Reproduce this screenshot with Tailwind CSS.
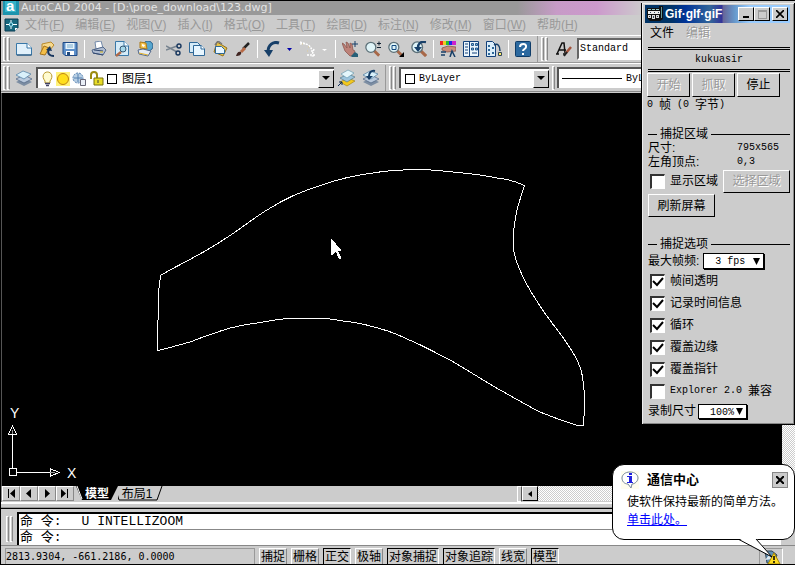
<!DOCTYPE html>
<html lang="zh-CN">
<head>
<meta charset="utf-8">
<title>AutoCAD 2004 - [D:\proe_download\123.dwg]</title>
<script src="https://cdn.jsdelivr.net/npm/@tailwindcss/browser@4"></script>
</head>
<body class="relative flex h-screen flex-col overflow-hidden border-y border-l border-black bg-[#ccc] font-['Liberation_Sans','Noto_Sans_CJK_SC',sans-serif] text-xs leading-4 text-black">

<!-- shared symbols -->
<svg class="hidden" aria-hidden="true">
  <symbol id="layers" viewBox="0 0 18 18"><path d="M1 13l8-4 8 4-8 4z" fill="#7d8ea3"/><path d="M1 10l8-4 8 4-8 4z" fill="#b9c9dc" stroke="#4a6080" stroke-width=".7"/><path d="M1 6l7-4 8 3-7 5z" fill="#d9f0fa" stroke="#4a7aa0" stroke-width=".7"/></symbol>
  <symbol id="layersY" viewBox="0 0 18 18"><path d="M2 13l8-4 7 3-8 5z" fill="#f2c81e" stroke="#9a7a10" stroke-width=".6"/><path d="M2 9l8-4 7 3-8 5z" fill="#9cc4dd" stroke="#4a7080" stroke-width=".6"/><path d="M3 5l7-4 6 3-7 5z" fill="#e4f6fb" stroke="#5a90a8" stroke-width=".6"/><path d="M0 17l4-4M1 13h3v3" stroke="#0a2a5a" fill="none"/></symbol>
  <symbol id="lens" viewBox="0 0 18 18"><path d="M11 11l6 6" stroke="#a86848" stroke-width="3.500"/><circle cx="7" cy="7" r="6" fill="#dff4f8" stroke="#5c7078" stroke-width="1.500"/></symbol>
  <symbol id="down" viewBox="0 0 8 5"><path d="M0 0h8L4 4z"/></symbol>
</svg>

<header class="flex h-[14px] shrink-0 items-center gap-[2px] bg-[linear-gradient(90deg,#999_0,#999_65%,#c79bc7_70%,#cc99cc_75%,#ccc_81%)] pl-[2px]">
  <svg class="h-[14px] w-4 shrink-0" viewBox="0 0 16 14"><path fill="#1c93ad" d="M0 0h16v14H0z"/><path d="M2 0h11v11H2z" fill="#35b3c8"/><text x="3" y="10" font-family="Liberation Sans" font-weight="bold" font-size="15" fill="#fff">a</text></svg>
  <h1 class="whitespace-nowrap font-['DejaVu_Sans',sans-serif] text-[11px] leading-[14px] text-[#e4e4e4]">AutoCAD 2004 - [D:\proe_download\123.dwg]</h1>
</header>

<nav class="flex h-[20px] shrink-0 items-center gap-[11px] whitespace-nowrap pl-[3px] text-[#999]">
  <svg class="-mr-[6px] h-4 w-4 shrink-0" viewBox="0 0 16 16"><path d="M1 2h13v9l-3 3H1z" fill="#18677e" stroke="#093a50"/><path d="M14 11l-3 3v-3z" fill="#fff"/><path d="M7 3v9M2 7.500h11" stroke="#fff"/><path d="M5.500 6h3v3h-3z" fill="#18677e" stroke="#8fe0f0"/></svg>
  <a href="#">文件(<u>F</u>)</a><a href="#">编辑(<u>E</u>)</a><a href="#">视图(<u>V</u>)</a><a href="#">插入(<u>I</u>)</a><a href="#">格式(<u>O</u>)</a><a href="#">工具(<u>T</u>)</a><a href="#">绘图(<u>D</u>)</a><a href="#">标注(<u>N</u>)</a><a href="#">修改(<u>M</u>)</a><a href="#">窗口(<u>W</u>)</a><a href="#">帮助(<u>H</u>)</a>
</nav>

<!-- standard toolbar -->
<div class="flex h-[28px] shrink-0 items-center border-t border-b border-t-white border-b-[#999] pl-[2px]">
  <div class="flex h-6 w-[7px] shrink-0 gap-px"><i class="w-[3px] border border-white border-r-[#888]"></i><i class="w-[3px] border border-white border-r-[#888]"></i></div>
  <div class="ml-px flex h-[18px] shrink-0 items-center gap-[7px] border-r border-white pr-[6px] pl-[5px]">
    <button aria-label="新建"><svg class="h-4 w-4" viewBox="0 0 16 16"><path d="M.5 2.500h11l4 4v7.500H.5z" fill="#e2f1fb" stroke="#3a78a8"/><path d="M11 2v5h5" fill="#fff" stroke="#3a78a8"/><path d="M1 14h14.500" stroke="#1c4870"/></svg></button>
    <button aria-label="打开"><svg class="h-4 w-4" viewBox="0 0 16 16"><path d="M3 3l9-2 3 3-4 5-8 1z" fill="#f7d98c" stroke="#b98a2c"/><path d="M1 13l4-8 5 2-4 7z" fill="#f4bf48" stroke="#a5731c"/><path d="M15 15c-5 0-7-3-5-7" stroke="#17365e" stroke-width="2" fill="none"/><path d="M7 9l4-4 2 5z" fill="#17365e"/></svg></button>
    <button aria-label="保存"><svg class="h-4 w-4" viewBox="0 0 16 16"><path d="M1 1.500h14v13H3l-2-2z" fill="#5d8fc9" stroke="#1f4a86"/><path d="M3.500 2h9v6h-9z" fill="#e8f4fb"/><path d="M5 4h6M5 6h6" stroke="#78aacc"/><path d="M4 10h8v4H4z" fill="#fff"/><path d="M5 11h3v3H5z" fill="#234a7c"/></svg></button>
  </div>
  <div class="ml-px flex h-[18px] shrink-0 items-center gap-[7px] border-r border-white pr-[6px] pl-[5px]">
    <button aria-label="打印"><svg class="h-4 w-4" viewBox="0 0 16 16"><path d="M4 1l6-1 2 7-7 1z" fill="#fff" stroke="#7188a8"/><path d="M1 9l11-3 3 3-3 5-10-2z" fill="#aebbd0" stroke="#53698c"/><path d="M2 12l10 2M3 9l9 1" stroke="#334a70"/><path d="M9 11h3" stroke="#e3c227"/></svg></button>
    <button aria-label="打印预览"><svg class="h-4 w-4" viewBox="0 0 16 16"><path d="M1.500.5h9l4 4v10h-13z" fill="#d5ebf8" stroke="#3a78a8"/><path d="M10 0v5h5" fill="#fff" stroke="#3a78a8"/><path d="M7 11l-5 4" stroke="#b06a48" stroke-width="2.500"/><circle cx="9" cy="8" r="3" fill="#a5d7ea" stroke="#365873"/></svg></button>
    <button aria-label="发布"><svg class="h-4 w-4" viewBox="0 0 16 16"><circle cx="11" cy="5" r="5" fill="#57a6ce" stroke="#255d88"/><path d="M3 1l6 1 1 6-7-1z" fill="#f4c34e" stroke="#ac7b1a"/><path d="M5 3l3 1-1 2-2-1z" fill="#fff"/><path d="M1 9l5-1 8 2-3 5-9-2z" fill="#e5ebf3" stroke="#53698c"/><path d="M2 12l9 2" stroke="#e3b227"/></svg></button>
  </div>
  <div class="ml-px flex h-[18px] shrink-0 items-center gap-[7px] border-r border-white pr-[6px] pl-[5px]">
    <button aria-label="剪切"><svg class="h-4 w-4" viewBox="0 0 16 16"><path d="M0 5l11 6M0 9l11-4" stroke="#77838f" stroke-width="1.500"/><circle cx="13" cy="5" r="2" fill="none" stroke="#17365e" stroke-width="1.400"/><circle cx="12" cy="12" r="2" fill="none" stroke="#17365e" stroke-width="1.400"/></svg></button>
    <button aria-label="复制"><svg class="h-4 w-4" viewBox="0 0 16 16"><path d="M.5 1.500h8l3 3v7H.5z" fill="#d5ebf8" stroke="#2f6898"/><path d="M4.500 4.500h8l3 3v7h-11z" fill="#e8f6ff" stroke="#2f6898"/><path d="M12 4v4h4" fill="#fff" stroke="#2f6898"/></svg></button>
    <button aria-label="粘贴"><svg class="h-4 w-4" viewBox="0 0 16 16"><path d="M5 1l10 6-4 8-9-4z" fill="#e5c24c" stroke="#93711f"/><path d="M3 4l3-4 4 3" fill="none" stroke="#777" stroke-width="1.500"/><path d="M3.500 5.500h6l3 3v4h-9z" fill="#e8f6ff" stroke="#2f6898"/></svg></button>
    <button aria-label="特性匹配"><svg class="h-4 w-4" viewBox="0 0 16 16"><path d="M8 8l6-6" stroke="#222" stroke-width="2.500"/><path d="M6 11l4-4" stroke="#b86a46" stroke-width="3"/><path d="M1 15c1-3 2-5 5-4 1 3-2 4-5 4" fill="#402420"/></svg></button>
  </div>
  <div class="ml-px flex h-[18px] shrink-0 items-center gap-[7px] border-r border-white pr-[8px] pl-[5px]">
    <button aria-label="放弃"><svg class="h-4 w-4" viewBox="0 0 16 16"><path d="M15 2C9 0 4 4 4 11" stroke="#173f68" stroke-width="3" fill="none"/><path d="M0 9h9l-4 7z" fill="#173f68"/></svg></button>
    <button aria-label="放弃列表"><svg class="h-[3px] w-[5px]" viewBox="0 0 5 3"><path d="M0 0h5L2.500 3z" fill="#00a"/></svg></button>
    <button aria-label="重做" disabled><svg class="h-4 w-4" viewBox="0 0 16 16"><path d="M1 3c6-2 12 2 12 8M1 1l6 2M8 14h8l-4 2M15 8l-2 6" stroke="#fff" stroke-width="1.500" stroke-dasharray="2 1" fill="none"/><path d="M3 3h1M9 6h1M8 10h1" stroke="#dc9"/></svg></button>
    <button aria-label="重做列表" disabled><svg class="h-[3px] w-[5px]" viewBox="0 0 5 3"><path d="M0 1h5L2.500 3z" fill="#fff"/></svg></button>
  </div>
  <div class="ml-px flex h-[18px] shrink-0 items-center gap-[7px] border-r border-white pr-[6px] pl-[5px]">
    <button aria-label="实时平移"><svg class="h-4 w-4" viewBox="0 0 16 16"><path d="M0 2l2 1 3 4-1-6 2 1 2 5V2l2 1 1 6 2 1-2 5H8L3 10z" fill="#bd8279" stroke="#855048" stroke-width=".7"/><path d="M9 15l4-4 3 2v3h-6z" fill="#286078"/><path d="M13 0v6M10 3h6" stroke="#173f68"/></svg></button>
    <button aria-label="实时缩放"><svg class="h-4 w-4" viewBox="0 0 16 16"><use href="#lens" width="15" height="16"/><path d="M12 2.500h4M14 .5v4M12 6.500h4" stroke="#123"/></svg></button>
    <button aria-label="窗口缩放"><svg class="h-4 w-4" viewBox="0 0 16 16"><use href="#lens" width="15" height="16"/><path d="M4 4.500h4v4H4z" fill="none" stroke="#124a80"/><path d="M16 11v5h-5z"/></svg></button>
    <button aria-label="缩放上一个"><svg class="h-4 w-4" viewBox="0 0 16 16"><use href="#lens" width="16" height="16"/><path d="M15 1C9 0 7 3 7 7" stroke="#173f68" stroke-width="2.500" fill="none"/><path d="M3 6h8l-4 5z" fill="#173f68"/></svg></button>
  </div>
  <div class="ml-px flex h-[18px] shrink-0 items-center gap-[7px] border-r border-white pr-[6px] pl-[5px]">
    <button aria-label="特性"><svg class="h-4 w-4" viewBox="0 0 16 16"><path d="M0 0h4v4H0z" fill="#e22"/><path d="M3 0h4v4H3z" fill="#ec2"/><path d="M6 0h3v4H6z" fill="#2b3"/><path d="M9 0h3v4H9z" fill="#22e"/><path d="M12 0h4v4h-4z" fill="#c2c"/><path d="M2 7l6-2 8 1v4L7 11 2 9z" fill="#c98e7c" stroke="#7b4a40" stroke-width=".7"/><path d="M1 11h5M1 14h4M10 16l2-6 3 6" stroke="#173f68" fill="none" stroke-width="1.500"/></svg></button>
    <button aria-label="设计中心"><svg class="h-4 w-4" viewBox="0 0 16 16"><path d="M.5.5h15v15H.5z" fill="#ecf6fc" stroke="#12407a"/><path d="M6.500 0v16" stroke="#12407a"/><path d="M2 3h3M2 6h3M2 9h3M2 12h3" stroke="#12407a"/><path d="M8.500 2.500h2v2h-2zM12.500 2.500h2v2h-2zM8.500 7h2v2h-2zM12.500 7h2v2h-2z" fill="#8bc" stroke="#245890"/><path d="M9 12h5" stroke="#12407a"/></svg></button>
    <button aria-label="工具选项板"><svg class="h-4 w-4" viewBox="0 0 16 16"><path d="M.5.5h6l3 3v12h-9z" fill="#dceefa" stroke="#12407a"/><path d="M2 4h2v2H2zM2 8h2v2H2zM2 12h2v2H2zM6 6h2v2H6zM6 11h2v2H6z" fill="#2f6898"/><path d="M8 4c4-2 6 1 6 6" stroke="#173f68" stroke-width="1.500" fill="none"/><path d="M12.500 11.500h3v3h-3z" fill="#fe6" stroke="#345"/></svg></button>
  </div>
  <div class="flex h-[26px] shrink-0 items-center border-r border-[#999] pr-[6px] pl-[6px]">
    <button aria-label="帮助"><svg class="h-4 w-4" viewBox="0 0 16 16"><rect x=".5" y=".5" width="15" height="15" rx="1" fill="#2c699f" stroke="#0f3c68"/><path d="M5 6c0-4 7-4 6 0 0 2-3 2-3 4" stroke="#fff" stroke-width="2" fill="none"/><path d="M7 12h2v2H7z" fill="#fff"/></svg></button>
  </div>
  <div class="ml-[3px] flex h-6 w-[10px] shrink-0 gap-px"><i class="w-[3px] border border-white border-r-[#888]"></i><i class="w-[3px] border border-white border-r-[#888]"></i></div>
  <svg class="mx-[5px] h-4 w-4 shrink-0" viewBox="0 0 16 16"><path d="M1 13l5-11h2l1 10M3 9h7M0 13h3M7 13h3" stroke="#111" stroke-width="1.500" fill="none"/><path d="M10 12l5-6" stroke="#a4533b" stroke-width="2.500"/><path d="M8 15l3-4" stroke="#222" stroke-width="2"/></svg>
  <select aria-label="文字样式" class="h-[22px] flex-1 appearance-none border-2 border-t-[#666] border-l-[#666] border-r-white border-b-white bg-white pl-px font-['Liberation_Mono',monospace] text-[10px]"><option>Standard</option></select>
</div>

<!-- layers and properties toolbar -->
<div class="flex h-[29px] shrink-0 items-center border-t border-b border-t-white border-b-[#888] pl-[2px]">
  <div class="flex h-6 w-[7px] shrink-0 gap-px"><i class="w-[3px] border border-white border-r-[#888]"></i><i class="w-[3px] border border-white border-r-[#888]"></i></div>
  <button class="ml-[5px] shrink-0" aria-label="图层特性管理器"><svg class="h-[18px] w-[18px]"><use href="#layers"/></svg></button>
  <div class="ml-[3px] flex h-[21px] w-[298px] shrink-0 items-center border-t-2 border-l-2 border-[#555] bg-white pl-[3px]">
    <svg class="h-4 w-[70px] shrink-0" viewBox="0 0 70 16"><path d="M4 10C0 5 3 1 6.500 1S13 5 9 10v2H4z" fill="#fffbd0" stroke="#b8982c"/><path d="M4 12.500h5M5 14.500h3" stroke="#446" stroke-width="1.500"/><path d="M15 1h14v14H15z" fill="#fff27a"/><circle cx="22" cy="8" r="5.500" fill="#ffdf1c" stroke="#c08510"/><circle cx="37" cy="7" r="5" fill="#b8cfe4" stroke="#5580b0" stroke-dasharray="2 1"/><path d="M37 3v8M33 7h8" stroke="#5580b0"/><path d="M39.500 8.500h5v6h-5z" fill="#e9eef6" stroke="#667"/><path d="M50 8V4c0-4 6-4 6 0v4" fill="none" stroke="#9c8c10" stroke-width="2"/><path d="M53 7h9v7h-9z" fill="#e8dc28" stroke="#77700c"/><path d="M57 9v3" stroke="#443"/></svg>
    <i class="-ml-[4px] h-[10px] w-[10px] shrink-0 border border-black"></i>
    <select aria-label="图层" class="ml-[5px] h-[18px] flex-1 appearance-none bg-white font-['Liberation_Sans','Noto_Sans_CJK_SC',sans-serif] text-xs leading-4"><option>图层1</option></select>
    <span class="flex h-[18px] w-4 items-center justify-center border border-t-white border-r-black border-b-black border-l-white bg-[#ccc]"><svg class="h-[5px] w-2"><use href="#down"/></svg></span>
  </div>
  <div class="flex h-[26px] shrink-0 items-center gap-[6px] border-r border-[#999] pr-[5px] pl-[4px]">
    <button aria-label="将对象的图层置为当前"><svg class="h-[18px] w-[18px]"><use href="#layersY"/></svg></button>
    <button aria-label="上一个图层"><svg class="h-[18px] w-[18px]" viewBox="0 0 18 18"><use href="#layers"/><path d="M13 2C9 1 7 4 7 7" stroke="#173f68" stroke-width="2" fill="none"/><path d="M4 7h7l-4 4z" fill="#173f68"/></svg></button>
  </div>
  <div class="ml-[3px] flex h-6 w-[10px] shrink-0 gap-px"><i class="w-[3px] border border-white border-r-[#888]"></i><i class="w-[3px] border border-white border-r-[#888]"></i></div>
  <div class="flex h-[21px] w-[150px] shrink-0 items-center border-t-2 border-l-2 border-[#555] bg-white pl-[4px]">
    <i class="h-[10px] w-[10px] shrink-0 border border-black"></i>
    <select aria-label="颜色" class="ml-[4px] h-[18px] min-w-0 flex-1 appearance-none bg-white font-['Liberation_Mono',monospace] text-[10px]"><option>ByLayer</option></select>
    <span class="flex h-[18px] w-4 items-center justify-center border border-t-white border-r-black border-b-black border-l-white bg-[#ccc]"><svg class="h-[5px] w-2"><use href="#down"/></svg></span>
  </div>
  <i class="ml-[3px] h-6 w-[3px] border border-white border-r-[#888]"></i>
  <div class="ml-[2px] flex h-[21px] flex-1 items-center border-t-2 border-l-2 border-[#555] bg-white pl-[3px]">
    <i class="h-px w-[60px] bg-black"></i>
    <select aria-label="线型" class="ml-[4px] h-[18px] flex-1 appearance-none bg-white font-['Liberation_Mono',monospace] text-[10px]"><option>ByLayer</option></select>
  </div>
</div>

<!-- drawing area -->
<main class="mt-px flex min-h-0 flex-1 border-l border-[#555]">
  <svg class="h-full min-w-0 flex-1 bg-black" role="img" aria-label="模型空间">
    <g transform="translate(-2 -93)" fill="none" stroke="#fff" shape-rendering="crispEdges">
      <path d="M160.500 275.500C172 268 203 254 223 240C238 231 252 219 267 210C284 199 302 191 322 185C339 179 356 175 373 173C396 169 426 169 443 171C461 173 480 174 497 178C507 179 517 182 524.500 185.500C523 190 521 196 519 203C516 212 515 220 514 228C513 236 513 244 514 252C515 258 517 264 520 270C523 278 528 287 533 295C539 305 545 314 552 323C558 331 563 337 568 345C573 352 577 359 580 367C583 375 583 382 584 390C585 399 584 408 584 417C584 420 584 423 583.500 425.500C578 426 574 425 570 423C560 420 550 416 540 412C526 405 513 397 500 390C483 380 467 370 450 360C436 353 422 345 407 339C395 333 383 329 370 326C361 323 352 322 343 321C337 320 330 319 323 318C313 318 302 318 292 318C280 319 268 321 257 323C248 324 239 326 230 328C217 332 203 337 190 342C179 345 169 348 157.500 350.500L158.500 292.500z"/>
      <path d="M331 239v16h1l3-3h1l3 7h2v-2l-3-6h3v-1l-9-11z" fill="#fff" stroke="none"/>
      <path d="M9.500 468.500h7v7h-7zM12.500 468v-34M17 472.500h34M12.500 426l-4 8h8zM59 472.500l-9-4v8z"/>
      <path d="M12.500 430v4M50 472.500h5" stroke="#999"/>
      <g fill="#fff" stroke="none" font-family="Liberation Sans" font-size="14"><text x="10" y="418">Y</text><text x="67" y="478">X</text></g>
    </g>
  </svg>
  <div class="w-[13px] shrink-0 bg-[repeating-conic-gradient(#fff_0_25%,#ccc_0_50%)] bg-[length:2px_2px]"></div>
</main>

<!-- layout tabs and horizontal scroll -->
<div class="flex h-[16px] shrink-0 border-l border-[#888]">
  <div class="flex h-[15px] shrink-0">
    <button aria-label="第一个" class="flex w-[18px] items-center justify-center border border-white border-r-[#888] border-b-[#888]"><svg class="h-[9px] w-2" viewBox="0 0 8 9"><path d="M1 0h1v9H1zM8 0v9L3 4.500z"/></svg></button>
    <button aria-label="上一个" class="flex w-[18px] items-center justify-center border border-white border-r-[#888] border-b-[#888]"><svg class="h-[9px] w-2" viewBox="0 0 8 9"><path d="M6 0v9L1 4.500z"/></svg></button>
    <button aria-label="下一个" class="flex w-[18px] items-center justify-center border border-white border-r-[#888] border-b-[#888]"><svg class="h-[9px] w-2" viewBox="0 0 8 9"><path d="M2 0v9l5-4.500z"/></svg></button>
    <button aria-label="最后一个" class="flex w-[18px] items-center justify-center border border-white border-r-[#888] border-b-[#888]"><svg class="h-[9px] w-2" viewBox="0 0 8 9"><path d="M0 0v9l5-4.500zM6 0h1v9H6z"/></svg></button>
  </div>
  <button class="relative ml-[2px] h-[15px] w-[42px] shrink-0 font-bold leading-[14px] text-white"><svg class="absolute inset-0 h-full w-full" viewBox="0 0 42 15"><path d="M0 0l6 14h29l7-14z"/><path d="M1 0l5 13" stroke="#fff"/></svg><span class="relative">模型</span></button>
  <button class="relative h-[15px] w-[46px] shrink-0 pr-2 leading-[14px]"><svg class="absolute inset-0 h-full w-full" viewBox="0 0 46 15"><path d="M-2 4l3 10h38l5-14" stroke="#000" fill="none"/></svg><span class="relative">布局1</span></button>
  <div class="flex-1"></div>
  <div class="flex w-[278px] shrink-0">
    <i class="w-[5px] border border-white border-r-[#555]"></i>
    <button aria-label="向左滚动" class="flex h-[15px] w-4 items-center justify-center border border-white border-r-black border-b-black"><svg class="h-[6px] w-1" viewBox="0 0 4 6"><path d="M4 0v6L0 3z"/></svg></button>
    <div class="h-[15px] flex-1 bg-[repeating-conic-gradient(#fff_0_25%,#ccc_0_50%)] bg-[length:2px_2px]"></div>
  </div>
</div>
<div class="h-[6px] shrink-0 border-t-2 border-b border-t-white border-b-[#999]"></div>

<!-- command line -->
<section class="flex h-[37px] shrink-0 border-t border-black pt-[3px] pr-[14px] pl-[5px]">
  <div class="mt-[4px] flex h-[26px] w-[11px] shrink-0 gap-px"><i class="w-[3px] border border-white border-r-[#888]"></i><i class="w-[3px] border border-white border-r-[#888]"></i></div>
  <div class="h-[33px] flex-1 border-t-2 border-l-2 border-t-black border-l-black bg-white pl-px font-['Liberation_Mono','Noto_Sans_CJK_SC',monospace] text-[13px] leading-[15px]">
    <div class="flex h-4 items-start gap-5 border-b border-[#888]"><span>命 令:</span><span>U INTELLIZOOM</span></div>
    <div class="flex h-[15px] items-start gap-5"><label for="cmd">命 令:</label><input id="cmd" class="h-[14px] flex-1 bg-white"></div>
  </div>
</section>

<!-- status bar -->
<footer class="flex h-[19px] shrink-0 items-start gap-1 border-t border-[#888] pt-[2px] pl-[4px] whitespace-nowrap">
  <output class="h-[16px] w-[250px] shrink-0 border border-b-0 border-[#999] font-['DejaVu_Sans_Mono',monospace] text-[10px] leading-[16px]">2813.9304, -661.2186, 0.0000</output>
  <button class="h-4 w-7 shrink-0 border border-b-0 border-white border-r-[#888] leading-[16px]">捕捉</button>
  <button class="h-4 w-7 shrink-0 border border-b-0 border-white border-r-[#888] leading-[16px]">栅格</button>
  <button class="h-4 w-7 shrink-0 border border-b-0 border-black border-r-white leading-[16px]">正交</button>
  <button class="h-4 w-7 shrink-0 border border-b-0 border-white border-r-[#888] leading-[16px]">极轴</button>
  <button class="h-4 w-[52px] shrink-0 border border-b-0 border-black border-r-white leading-[16px]">对象捕捉</button>
  <button class="h-4 w-[52px] shrink-0 border border-b-0 border-black border-r-white leading-[16px]">对象追踪</button>
  <button class="h-4 w-7 shrink-0 border border-b-0 border-white border-r-[#888] leading-[16px]">线宽</button>
  <button class="h-4 w-7 shrink-0 border border-b-0 border-black border-r-white leading-[16px]">模型</button>
  <div class="flex-1"></div>
  <div class="mr-[12px] h-4 w-[24px] shrink-0 border border-b-0 border-[#999] border-r-white"><svg class="ml-[3px] h-[15px] w-[18px]" viewBox="0 0 18 15"><path d="M2 2h7l5 4-3 8H4z" fill="#5f8fb4" stroke="#345"/><path d="M2 11l4-5 3 4" fill="#dce8f0"/><path d="M11 4l6 11H5z" fill="#fd2" stroke="#a80"/><path d="M11 7v4M11 12v2" stroke="#000" stroke-width="1.500"/></svg></div>
</footer>

<!-- capture tool window -->
<aside class="absolute top-[2px] right-0 w-[154px] border border-t-0 border-black bg-[#ccc] pt-[2px] pr-[4px] pb-[4px] pl-[3px] shadow-[inset_1px_1px_#eee,inset_-1px_-1px_#888]">
  <div class="flex h-[18px] items-center bg-[linear-gradient(90deg,#036_0,#036_18%,#039_28%,#369_45%,#339_53%,#669_54%,#69c_62%,#9cf_72%,#9cf_100%)] pr-[2px] pl-[2px] text-white">
    <svg class="h-4 w-4 shrink-0" viewBox="0 0 16 16"><path d="M0 2h12V0h4v13l-3 2H3l-3-3z" fill="#111"/><path d="M1 3h3v1H1zM5 3h3v1H5zM9 3h3v1H9z" fill="#9cc"/><path d="M1 5h12v3H1z" fill="#eee"/><path d="M1 9h3v3H1zM5 9h3v4H5zM9 9h3v3H9z" fill="#ddd"/><path d="M3 6h1v1H3zM7 6h1v1H7zM11 6h1v1h-1zM2 10h1v1H2zM6 10h1v2H6zM10 10h1v1h-1z" fill="#345"/><path d="M14 1h1v11h-1z" fill="#699"/></svg>
    <h2 class="ml-[2px] flex-1 whitespace-nowrap text-xs font-bold">Gif·gIf·giF</h2>
    <button aria-label="最小化" class="flex h-[14px] w-4 items-end justify-center border border-white border-r-black border-b-black bg-[#ccc] pb-[2px]"><i class="h-[2px] w-[6px] bg-black"></i></button>
    <button aria-label="最大化" disabled class="flex h-[14px] w-4 items-center justify-center border border-white border-r-black border-b-black bg-[#ccc]"><i class="h-[9px] w-[9px] border border-t-2 border-[#999]"></i></button>
    <button aria-label="关闭" class="ml-[2px] flex h-[14px] w-4 items-center justify-center border border-white border-r-black border-b-black bg-[#ccc]"><svg class="h-2 w-2" viewBox="0 0 8 8"><path d="M0 0l8 8M8 0L0 8" stroke="#000" stroke-width="1.600"/></svg></button>
  </div>
  <nav class="flex h-[20px] items-center gap-3 pl-[5px]"><a href="#">文件</a><a href="#" class="text-[#999] [text-shadow:1px_1px_#fff]">编辑</a></nav>
  <div class="mt-[4px] ml-[3px] flex h-[25px] items-center justify-center border-y-3 border-double border-black font-['Liberation_Mono',monospace] text-[10px]">kukuasir</div>
  <div class="mt-px flex gap-[2px] pl-[2px]">
    <button disabled class="h-6 w-[43px] border border-t-white border-r-black border-b-black border-l-white text-[#999] [text-shadow:1px_1px_#fff]">开始</button>
    <button disabled class="h-6 w-[43px] border border-t-white border-r-black border-b-black border-l-white text-[#999] [text-shadow:1px_1px_#fff]">抓取</button>
    <button class="h-6 w-[43px] border border-t-white border-r-black border-b-black border-l-white">停止</button>
  </div>
  <div class="flex h-4 items-center pl-[2px] whitespace-pre"><span class="font-['Liberation_Mono',monospace] text-[10px]">0 </span>帧<span class="font-['Liberation_Mono',monospace] text-[10px]"> (0 </span>字节<span class="font-['Liberation_Mono',monospace] text-[10px]">)</span></div>
  <section class="mt-[14px] pl-[3px]">
    <h3 class="flex h-[14px] items-center gap-[3px]"><i class="h-px w-[9px] bg-black"></i>捕捉区域<i class="h-px flex-1 bg-black"></i></h3>
    <dl class="grid grid-cols-[89px_1fr] items-center leading-[14px]">
      <dt>尺寸:</dt><dd class="font-['Liberation_Mono',monospace] text-[10px]">795x565</dd>
      <dt>左角顶点:</dt><dd class="font-['Liberation_Mono',monospace] text-[10px]">0,3</dd>
    </dl>
    <div class="flex h-[24px] items-center">
      <label class="flex flex-1 items-center gap-[5px] pl-[2px]"><input type="checkbox" class="h-[15px] w-[15px] appearance-none border-t-2 border-r border-b border-l-2 border-t-[#333] border-r-white border-b-white border-l-[#333] bg-white">显示区域</label>
      <button disabled class="h-[23px] w-[67px] border border-t-white border-r-black border-b-black border-l-white text-[#999] [text-shadow:1px_1px_#fff]">选择区域</button>
    </div>
    <button class="mt-px h-[23px] w-[67px] border border-t-white border-r-black border-b-black border-l-white">刷新屏幕</button>
  </section>
  <section class="mt-[20px] pl-[3px]">
    <h3 class="flex h-[14px] items-center gap-[3px]"><i class="h-px w-[9px] bg-black"></i>捕捉选项<i class="h-px flex-1 bg-black"></i></h3>
    <label class="flex h-[19px] items-center">最大帧频:<span class="relative ml-[4px]"><select class="block h-4 w-[61px] appearance-none border border-black bg-white pl-[11px] font-['Liberation_Mono',monospace] text-[10px] shadow-[1px_1px_#000]"><option>3 fps</option></select><svg class="pointer-events-none absolute top-[5px] right-[4px] h-[7px] w-[7px]" viewBox="0 0 7 7"><path d="M0 0h7L3.500 7z"/></svg></span></label>
    <div class="flex flex-col pl-[2px]">
      <label class="flex h-[22px] items-center gap-[5px]"><span class="relative flex"><input type="checkbox" checked class="peer h-[15px] w-[15px] appearance-none border-t-2 border-r border-b border-l-2 border-t-[#333] border-r-white border-b-white border-l-[#333] bg-white"><svg class="pointer-events-none invisible absolute inset-0 h-[15px] w-[15px] peer-checked:visible" viewBox="0 0 15 15"><path d="M3 7l4 4 6-7" fill="none" stroke="#000" stroke-width="2"/></svg></span>帧间透明</label>
      <label class="flex h-[22px] items-center gap-[5px]"><span class="relative flex"><input type="checkbox" checked class="peer h-[15px] w-[15px] appearance-none border-t-2 border-r border-b border-l-2 border-t-[#333] border-r-white border-b-white border-l-[#333] bg-white"><svg class="pointer-events-none invisible absolute inset-0 h-[15px] w-[15px] peer-checked:visible" viewBox="0 0 15 15"><path d="M3 7l4 4 6-7" fill="none" stroke="#000" stroke-width="2"/></svg></span>记录时间信息</label>
      <label class="flex h-[22px] items-center gap-[5px]"><span class="relative flex"><input type="checkbox" checked class="peer h-[15px] w-[15px] appearance-none border-t-2 border-r border-b border-l-2 border-t-[#333] border-r-white border-b-white border-l-[#333] bg-white"><svg class="pointer-events-none invisible absolute inset-0 h-[15px] w-[15px] peer-checked:visible" viewBox="0 0 15 15"><path d="M3 7l4 4 6-7" fill="none" stroke="#000" stroke-width="2"/></svg></span>循环</label>
      <label class="flex h-[22px] items-center gap-[5px]"><span class="relative flex"><input type="checkbox" checked class="peer h-[15px] w-[15px] appearance-none border-t-2 border-r border-b border-l-2 border-t-[#333] border-r-white border-b-white border-l-[#333] bg-white"><svg class="pointer-events-none invisible absolute inset-0 h-[15px] w-[15px] peer-checked:visible" viewBox="0 0 15 15"><path d="M3 7l4 4 6-7" fill="none" stroke="#000" stroke-width="2"/></svg></span>覆盖边缘</label>
      <label class="flex h-[22px] items-center gap-[5px]"><span class="relative flex"><input type="checkbox" checked class="peer h-[15px] w-[15px] appearance-none border-t-2 border-r border-b border-l-2 border-t-[#333] border-r-white border-b-white border-l-[#333] bg-white"><svg class="pointer-events-none invisible absolute inset-0 h-[15px] w-[15px] peer-checked:visible" viewBox="0 0 15 15"><path d="M3 7l4 4 6-7" fill="none" stroke="#000" stroke-width="2"/></svg></span>覆盖指针</label>
      <label class="flex h-[22px] items-center gap-[5px]"><input type="checkbox" class="h-[15px] w-[15px] appearance-none border-t-2 border-r border-b border-l-2 border-t-[#333] border-r-white border-b-white border-l-[#333] bg-white"><span class="flex items-center whitespace-pre"><span class="font-['Liberation_Mono',monospace] text-[10px]">Explorer 2.0 </span>兼容</span></label>
    </div>
    <label class="flex h-[18px] items-center">录制尺寸<span class="relative ml-[2px]"><select class="block h-[15px] w-[49px] appearance-none border border-black bg-white pl-[11px] font-['Liberation_Mono',monospace] text-[10px] shadow-[1px_1px_#000]"><option>100%</option></select><svg class="pointer-events-none absolute top-[4px] right-[4px] h-[7px] w-[7px]" viewBox="0 0 7 7"><path d="M0 0h7L3.500 7z"/></svg></span></label>
  </section>
</aside>

<!-- communication center balloon -->
<div role="status" class="absolute right-0 bottom-[24px] w-[183px] rounded-[12px] border border-black bg-white pt-[6px] pr-[6px] pb-[10px] pl-[8px]">
  <div class="flex items-center">
    <svg class="h-[18px] w-[18px] shrink-0" viewBox="0 0 18 18"><path d="M0 0h18v18H0z" fill="#fffdee"/><path d="M9 1c5 0 8 3 8 6s-3 6-6 6l-1 4-3-4C3 13 1 10 1 7s3-6 8-6z" fill="#fff" stroke="#789"/><path d="M8 2h3v2H8zM6 5h5v6h1v1H6v-1h2V6H6z" fill="#22d"/></svg>
    <h2 class="ml-[8px] flex-1 text-[13px] font-bold">通信中心</h2>
    <button aria-label="关闭" class="flex h-4 w-4 items-center justify-center border border-[#888] bg-[#ccc]"><svg class="h-2 w-2" viewBox="0 0 8 8"><path d="M0 0l8 8M8 0L0 8" stroke="#000" stroke-width="2"/></svg></button>
  </div>
  <p class="mt-[4px] pl-[6px] leading-[18px] whitespace-nowrap">使软件保持最新的简单方法。</p>
  <p class="pl-[6px] leading-[18px]"><a href="#" class="text-[#00f] underline">单击此处。</a></p>
  <svg class="absolute top-full right-[21px] h-5 w-9" viewBox="0 0 36 20"><path d="M1-1l34 19L19-1z" fill="#fff"/><path d="M1 0l34 18L19 0" fill="none" stroke="#000"/></svg>
</div>
</body>
</html>
